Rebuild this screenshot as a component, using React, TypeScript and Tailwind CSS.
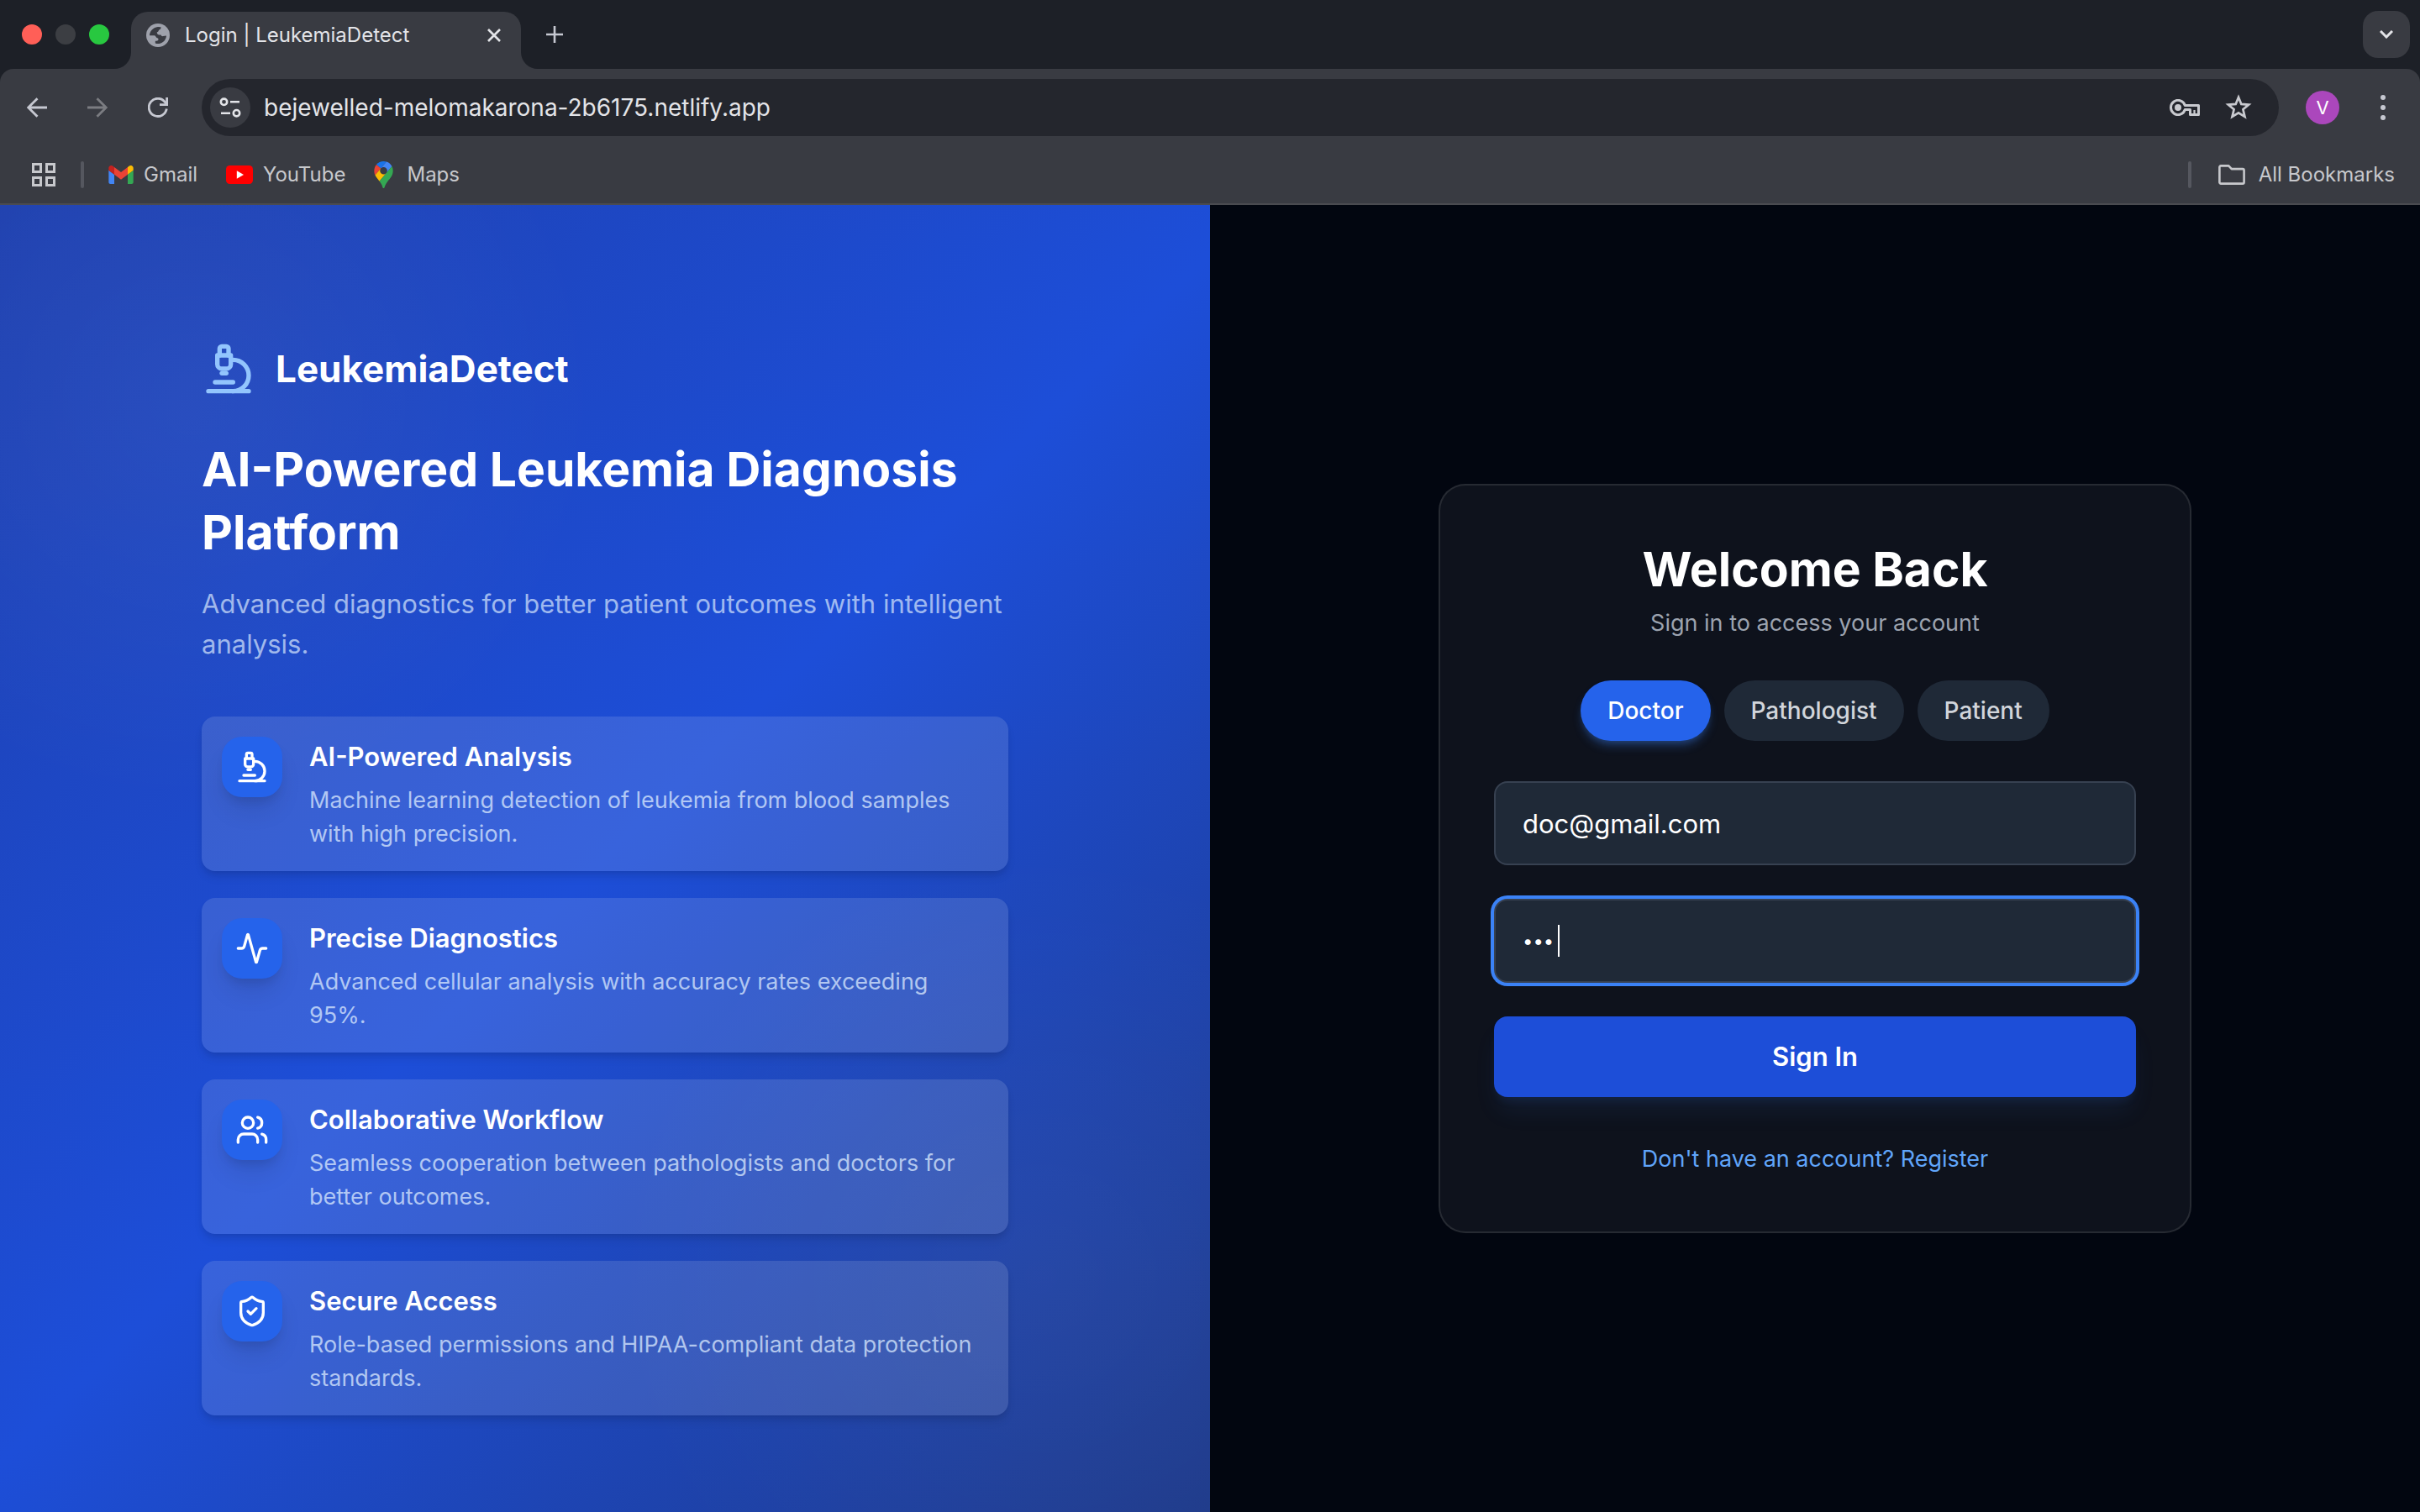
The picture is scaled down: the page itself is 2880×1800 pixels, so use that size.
import React, { useState } from "react";
import type { ReactNode } from "react";
import { Activity, Microscope, ShieldCheck, Users } from "lucide-react";
import type { LucideIcon } from "lucide-react";

function GlobeIcon() {
  return (
    <svg viewBox="0 0 28 28" className="size-7 shrink-0" aria-hidden="true">
      <circle cx="14" cy="14" r="14" fill="#9ea1ab" />
      <path
        fill="#393b42"
        d="M4 14.2C4 10 7.5 4.6 14 4l3.5.3c.2 1.7-.7 3-2.5 3.4-.3 1.5-.8 2.3-2.3 2.8.2 1.5.9 2.7 2.3 2.9l2.5.2c.5 1.2 1.3 1.7 2.5 1.5l4-.6c-.3 4.5-3.6 8.8-8.5 9.5-1.7.2-3.5 0-4.7-.6v-2.7c1.9 0 3.4-.2 3.7-1.8.2-1.3-.7-1.7-2-2-1-.3-1.3-2.4-2.5-2.6z"
      />
    </svg>
  );
}

function BackIcon({ forward = false }: { forward?: boolean }) {
  return (
    <svg
      viewBox="0 0 24 24"
      className="size-6"
      fill="none"
      stroke={forward ? "#7b7c81" : "#c6c8d1"}
      strokeWidth="2.8"
      aria-hidden="true"
    >
      {forward ? <path d="M0 12h22M11.5 1.2 22.3 12 11.5 22.8" /> : <path d="M24 12H2M12.5 1.2 1.7 12l10.8 10.8" />}
    </svg>
  );
}

function ReloadIcon() {
  return (
    <svg viewBox="0 0 24 24" className="size-6" fill="none" stroke="#c6c8d1" strokeWidth="2.8" aria-hidden="true">
      <path d="M22.3 13.5A10.6 10.6 0 1 1 20.4 5.6L22.5 8" />
      <path d="M22.6 0v8.7H14" />
    </svg>
  );
}

function TuneIcon() {
  return (
    <svg viewBox="0 0 26 26" className="size-[26px]" fill="none" stroke="#e3e4e8" strokeWidth="2.6" aria-hidden="true">
      <circle cx="5.5" cy="6.3" r="3.7" />
      <path d="M13 6.3h11M2 19.7h11" />
      <circle cx="20.5" cy="19.7" r="3.7" />
    </svg>
  );
}

function KeyIcon() {
  return (
    <svg viewBox="0 0 36 20" className="h-5 w-9" aria-hidden="true">
      <g fill="none" stroke="#c9cacf" strokeWidth="3">
        <path strokeLinejoin="round" d="M18.3 7.5A8.6 8.6 0 1 0 18.3 12.5H24.5V18.5H34.5V7.5Z" />
        <path strokeWidth="2.2" d="M29.5 13v5" />
      </g>
      <circle cx="10" cy="10" r="4" fill="#c9cacf" />
    </svg>
  );
}

function StarIcon() {
  return (
    <svg viewBox="0 0 32 32" className="size-8" fill="none" stroke="#c9cacf" strokeWidth="2.7" aria-hidden="true">
      <path d="m16 3.8 3.3 8.1 8.9.7-6.8 5.7 2.1 8.6L16 22.3l-7.5 4.6 2.1-8.6-6.8-5.7 8.9-.7z" />
    </svg>
  );
}

function AppsIcon() {
  return (
    <svg viewBox="0 0 28 28" className="size-7" fill="none" stroke="#c7c8cc" strokeWidth="3" aria-hidden="true">
      <path d="M1.5 1.5h9v9h-9zM17.5 1.5h9v9h-9zM1.5 17.5h9v9h-9zM17.5 17.5h9v9h-9z" />
    </svg>
  );
}

function GmailIcon() {
  return (
    <svg viewBox="52 42 88 66" className="h-[22px] w-[30px]" aria-hidden="true">
      <path fill="#4285f4" d="M58 108h14V74L52 59v43c0 3.32 2.69 6 6 6" />
      <path fill="#34a853" d="M120 108h14c3.32 0 6-2.69 6-6V59l-20 15" />
      <path fill="#fbbc04" d="M120 48v26l20-15v-8c0-7.42-8.47-11.65-14.4-7.2" />
      <path fill="#ea4335" d="M72 74V48l24 18 24-18v26L96 92" />
      <path fill="#c5221f" d="M52 51v8l20 15V48l-5.6-4.2c-5.94-4.45-14.4-.22-14.4 7.2" />
    </svg>
  );
}

function YouTubeIcon() {
  return (
    <svg viewBox="0 0 32 24" className="h-6 w-8" aria-hidden="true">
      <rect y="1" width="32" height="22" rx="4.5" fill="#ff0000" />
      <path fill="#fff" d="M12.8 7.3v9.4L21 12z" />
    </svg>
  );
}

function MapsIcon() {
  return (
    <svg viewBox="0 0 92.3 132.3" className="h-8 w-[23px]" aria-hidden="true">
      <path fill="#1a73e8" d="M60.2 2.2C55.8.8 51 0 46.1 0 32 0 19.3 6.4 10.8 16.5l21.8 18.3L60.2 2.2z" />
      <path fill="#ea4335" d="M10.8 16.5C4.1 24.5 0 34.9 0 46.1c0 8.7 1.7 15.7 4.6 22l28-33.3-21.8-18.3z" />
      <path
        fill="#4285f4"
        d="M46.2 28.5c9.8 0 17.7 7.9 17.7 17.7 0 4.3-1.6 8.3-4.2 11.4 0 0 13.9-16.6 27.5-32.7-5.6-10.8-15.3-19-27-22.7L32.6 34.8c3.3-3.8 8.1-6.3 13.6-6.3"
      />
      <path
        fill="#fbbc04"
        d="M46.2 63.8c-9.8 0-17.7-7.9-17.7-17.7 0-4.3 1.5-8.3 4.1-11.3l-28 33.3c4.8 10.6 12.8 19.2 21 29.9l34.1-40.5c-3.3 3.9-8.1 6.3-13.5 6.3"
      />
      <path
        fill="#34a853"
        d="M59.1 109.2c15.4-24.1 33.3-35 33.3-63 0-7.7-1.9-14.9-5.2-21.3L25.6 98c2.6 3.4 5.3 7.3 7.9 11.3 9.4 14.5 6.8 23.1 12.8 23.1s3.4-8.7 12.8-23.2"
      />
    </svg>
  );
}

function FolderIcon() {
  return (
    <svg viewBox="0 0 32 24" className="h-6 w-8" fill="none" stroke="#c7c8cc" strokeWidth="2.6" strokeLinejoin="round" aria-hidden="true">
      <path d="M3 1.4h9.3l3.5 3.7H29a1.6 1.6 0 0 1 1.6 1.6V21a1.6 1.6 0 0 1-1.6 1.6H3A1.6 1.6 0 0 1 1.4 21V3A1.6 1.6 0 0 1 3 1.4z" />
    </svg>
  );
}

/* Concave corner that joins the active tab to the toolbar. */
function TabFlare({ right = false }: { right?: boolean }) {
  return (
    <svg viewBox="0 0 20 20" className="size-5 shrink-0" fill="#393b42" aria-hidden="true">
      {right ? <path d="M0 0v20h20A20 20 0 0 1 0 0z" /> : <path d="M20 0v20H0A20 20 0 0 0 20 0z" />}
    </svg>
  );
}

function TabStrip() {
  return (
    <div className="flex h-[82px] items-end bg-[#1d2027]">
      <div className="flex h-full items-center gap-4 pl-[26px]">
        <span className="size-6 rounded-full bg-[#ff5f57]" />
        <span className="size-6 rounded-full bg-[#3c3e43]" />
        <span className="size-6 rounded-full bg-[#28c840]" />
      </div>
      <div className="flex items-end pl-1.5">
        <TabFlare />
        <div className="flex h-[68px] w-[464px] items-start rounded-t-[20px] bg-[#393b42] pl-[18px] pr-5 pt-3.5">
          <GlobeIcon />
          <span className="ml-[18px] flex-1 text-[24px] leading-7 text-[#e3e4e8]">Login | LeukemiaDetect</span>
          <button type="button" aria-label="Close tab" className="flex h-7 w-6 items-center justify-center">
            <svg viewBox="0 0 16 16" className="size-4" stroke="#e3e4e8" strokeWidth="2.7" aria-hidden="true">
              <path d="M1 1l14 14M15 1 1 15" />
            </svg>
          </button>
        </div>
        <TabFlare right />
      </div>
      <button type="button" aria-label="New tab" className="ml-2.5 flex h-full w-5 items-center justify-center">
        <svg viewBox="0 0 20 20" className="size-5" stroke="#c6c8d1" strokeWidth="2.6" aria-hidden="true">
          <path d="M10 0v20M0 10h20" />
        </svg>
      </button>
      <div className="ml-auto flex h-full items-center pr-3">
        <button type="button" aria-label="Search tabs" className="flex size-14 items-center justify-center rounded-[18px] bg-[#393b42]">
          <svg viewBox="0 0 16 10" className="h-2.5 w-4" fill="none" stroke="#e3e4e8" strokeWidth="3" aria-hidden="true">
            <path d="M1 1l7 7 7-7" />
          </svg>
        </button>
      </div>
    </div>
  );
}

function Toolbar({ url }: { url: string }) {
  return (
    <div className="bg-[#1d2027]">
      <div className="flex h-[92px] items-center rounded-t-[16px] bg-[#393b42] pl-8 pr-10">
        <div className="flex items-center gap-12">
          <button type="button" aria-label="Back">
            <BackIcon />
          </button>
          <button type="button" aria-label="Forward">
            <BackIcon forward />
          </button>
          <button type="button" aria-label="Reload">
            <ReloadIcon />
          </button>
        </div>
        <div className="ml-10 flex h-[68px] flex-1 items-center rounded-full bg-[#24262d] pl-2.5 pr-8">
          <button
            type="button"
            aria-label="View site information"
            className="flex size-12 items-center justify-center rounded-full bg-[#393b42]"
          >
            <TuneIcon />
          </button>
          <input
            type="text"
            aria-label="Address"
            defaultValue={url}
            className="ml-4 h-12 flex-1 bg-transparent text-[28px] text-[#e3e4e8] outline-none"
          />
          <button type="button" aria-label="Manage passwords">
            <KeyIcon />
          </button>
          <button type="button" aria-label="Bookmark this tab" className="ml-[30px]">
            <StarIcon />
          </button>
        </div>
        <button
          type="button"
          aria-label="Profile"
          className="ml-8 flex size-10 items-center justify-center rounded-full bg-[#ab47bc] text-[22px] leading-none text-white"
        >
          V
        </button>
        <button type="button" aria-label="Menu" className="ml-12 flex h-8 w-2 flex-col items-center justify-between py-px">
          <span className="size-1.5 rounded-full bg-[#c6c8d1]" />
          <span className="size-1.5 rounded-full bg-[#c6c8d1]" />
          <span className="size-1.5 rounded-full bg-[#c6c8d1]" />
        </button>
      </div>
    </div>
  );
}

function Bookmark({ icon, children }: { icon: ReactNode; children: ReactNode }) {
  return (
    <a href="#" className="flex items-center gap-3">
      {icon}
      {children}
    </a>
  );
}

function BookmarksBar() {
  return (
    <nav
      aria-label="Bookmarks"
      className="flex h-[70px] items-center border-b-2 border-[#4a4b50] bg-[#393b42] pl-[38px] pr-[30px] text-[24px] text-[#c7c8cc]"
    >
      <button type="button" aria-label="Apps">
        <AppsIcon />
      </button>
      <span className="ml-[30px] h-8 w-1 rounded-full bg-[#55575f]" />
      <div className="ml-[29px] flex items-center gap-[34px]">
        <Bookmark icon={<GmailIcon />}>Gmail</Bookmark>
        <Bookmark icon={<YouTubeIcon />}>YouTube</Bookmark>
        <Bookmark icon={<MapsIcon />}>
          <span className="ml-1">Maps</span>
        </Bookmark>
      </div>
      <span className="ml-auto h-8 w-1 rounded-full bg-[#55575f]" />
      <a href="#" className="ml-8 flex items-center gap-4">
        <FolderIcon />
        All Bookmarks
      </a>
    </nav>
  );
}

const features: { icon: LucideIcon; title: string; text: string }[] = [
  {
    icon: Microscope,
    title: "AI-Powered Analysis",
    text: "Machine learning detection of leukemia from blood samples with high precision.",
  },
  {
    icon: Activity,
    title: "Precise Diagnostics",
    text: "Advanced cellular analysis with accuracy rates exceeding 95%.",
  },
  {
    icon: Users,
    title: "Collaborative Workflow",
    text: "Seamless cooperation between pathologists and doctors for better outcomes.",
  },
  {
    icon: ShieldCheck,
    title: "Secure Access",
    text: "Role-based permissions and HIPAA-compliant data protection standards.",
  },
];

function Intro() {
  return (
    <section className="bg-[radial-gradient(circle_at_16%_15%,rgba(255,255,255,0.05),transparent_27%),radial-gradient(circle_at_86%_82%,rgba(255,255,255,0.04),transparent_29%),linear-gradient(135deg,#1e40af,#1d4ed8_50%,#1e3a8a)] px-60 pb-[115px] pt-[163px]">
      <div className="flex items-center gap-6">
        <Microscope className="size-16 text-[#93c5fd]" strokeWidth={2} />
        <h1 className="text-[44px] font-bold leading-[56px] text-white">LeukemiaDetect</h1>
      </div>
      <h2 className="mt-[50px] text-[57px] font-bold leading-[75px] text-white">AI-Powered Leukemia Diagnosis Platform</h2>
      <p className="mt-6 text-[31px] leading-[48px] text-[#dbeafe]/70">
        Advanced diagnostics for better patient outcomes with intelligent analysis.
      </p>
      <ul className="mt-[62px] flex flex-col gap-8">
        {features.map(({ icon: Icon, title, text }) => (
          <li
            key={title}
            className="flex items-start gap-8 rounded-2xl bg-white/12 p-6 shadow-[0_8px_12px_-2px_rgba(0,0,0,0.1),0_4px_8px_-4px_rgba(0,0,0,0.1)]"
          >
            <span className="flex size-[72px] shrink-0 items-center justify-center rounded-3xl bg-[#2563eb] text-white shadow-[0_20px_30px_-6px_rgba(0,0,0,0.1),0_8px_12px_-4px_rgba(0,0,0,0.1)]">
              <Icon className="size-10" strokeWidth={2} />
            </span>
            <div>
              <h3 className="text-[31px] font-semibold leading-[48px] text-white">{title}</h3>
              <p className="mt-2 text-[27px] leading-10 text-[#dbeafe]/75">{text}</p>
            </div>
          </li>
        ))}
      </ul>
    </section>
  );
}

const roles = ["Doctor", "Pathologist", "Patient"];

function LoginCard() {
  const [role, setRole] = useState("Doctor");
  const [email, setEmail] = useState("doc@gmail.com");
  const [password, setPassword] = useState("doc");

  return (
    <form
      onSubmit={(event) => event.preventDefault()}
      className="flex w-full max-w-4xl flex-col rounded-[32px] border-2 border-white/10 bg-white/5 p-16"
    >
      <h2 className="text-center text-[57px] font-bold leading-[72px] text-white">Welcome Back</h2>
      <p className="mt-2 text-center text-[27px] leading-10 text-[#9ca3af]">Sign in to access your account</p>

      <div role="group" aria-label="Role" className="mt-12 flex justify-center gap-4">
        {roles.map((name) => (
          <button
            key={name}
            type="button"
            aria-pressed={role === name}
            onClick={() => setRole(name)}
            className={
              role === name
                ? "rounded-full bg-[#2563eb] px-8 py-4 text-[28px] font-medium leading-10 text-white shadow-[0_8px_12px_-2px_rgba(59,130,246,0.3),0_4px_8px_-4px_rgba(59,130,246,0.3)]"
                : "rounded-full bg-[#1f2937] px-8 py-4 text-[28px] font-medium leading-10 text-[#d1d5db]"
            }
          >
            {name}
          </button>
        ))}
      </div>

      <input
        type="email"
        aria-label="Email"
        value={email}
        onChange={(event) => setEmail(event.target.value)}
        className="mt-12 h-[100px] w-full rounded-2xl border-2 border-[#374151] bg-[#1f2937] px-8 text-[31px] text-white outline-none"
      />

      <div className="relative mt-10">
        <input
          type="password"
          aria-label="Password"
          value={password}
          onChange={(event) => setPassword(event.target.value)}
          className="block h-[100px] w-full rounded-2xl border-2 border-[#374151] bg-[#1f2937] px-8 text-[22px] text-white caret-transparent outline-none ring-4 ring-[#3b82f6]"
        />
        <span className="absolute left-[76px] top-[31px] h-[38px] w-0.5 bg-white" />
      </div>

      <button
        type="submit"
        className="mt-10 rounded-2xl bg-[#1d4ed8] py-6 text-[31px] font-semibold leading-[48px] text-white shadow-[0_20px_30px_-6px_rgba(59,130,246,0.1),0_8px_12px_-4px_rgba(59,130,246,0.1)]"
      >
        Sign In
      </button>

      <a href="#" className="mt-[52px] self-center text-[27px] leading-[44px] text-[#60a5fa]">
        Don't have an account? Register
      </a>
    </form>
  );
}

export default function App() {
  return (
    <div className="flex min-h-screen flex-col bg-[#020610] font-['Inter',sans-serif]">
      <header>
        <TabStrip />
        <Toolbar url="bejewelled-melomakarona-2b6175.netlify.app" />
        <BookmarksBar />
      </header>
      <main className="grid flex-1 grid-cols-2">
        <Intro />
        <section className="flex items-center justify-center">
          <LoginCard />
        </section>
      </main>
    </div>
  );
}
